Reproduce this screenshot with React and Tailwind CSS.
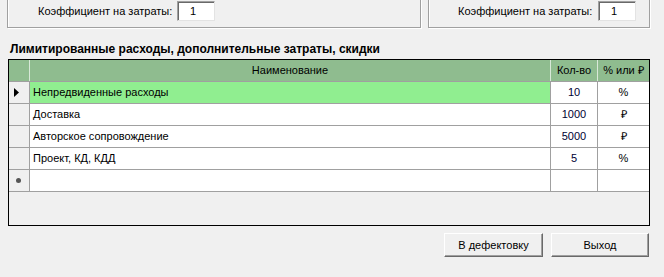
import React from 'react';

const rows = [
    { name: 'Непредвиденные расходы', qty: '10', unit: '%', selected: true },
    { name: 'Доставка', qty: '1000', unit: '₽' },
    { name: 'Авторское сопровождение', qty: '5000', unit: '₽' },
    { name: 'Проект, КД, КДД', qty: '5', unit: '%' },
];

const Field = ({ value }) => (
    <div className="w-[38px] h-[20px] bg-white border-t border-l border-[#a0a0a0] border-b border-r border-b-[#e3e3e3] border-r-[#e3e3e3] shadow-[inset_1px_1px_0_#696969] flex items-center pl-[12px]">
        {value}
    </div>
);

const Group = ({ className, labelClass }) => (
    <div className={`-mt-[10px] h-[38px] border border-[#a0a0a0] shadow-[1px_1px_0_#ffffff,inset_1px_1px_0_#ffffff] ${className}`}>
        <div className="flex items-center mt-[10px]">
            <span className={labelClass}>Коэффициент на затраты:</span>
            <Field value="1" />
        </div>
    </div>
);

const Button = ({ children, className }) => (
    <button className={`h-[24px] bg-[#f0f0f0] border border-t-white border-l-white border-b-[#696969] border-r-[#696969] shadow-[inset_-1px_-1px_0_#a0a0a0] ${className}`}>
        {children}
    </button>
);

const App = () => {
    return (
        <div className="w-[664px] h-[277px] overflow-hidden bg-[#f0f0f0] text-[11px] text-black font-['Liberation_Sans',Arial,sans-serif]">
            <div className="flex pl-[7px]">
                <Group className="w-[414px] pl-[30px]" labelClass="w-[139px]" />
                <Group className="w-[222px] ml-[7px] pl-[29px]" labelClass="w-[140px]" />
            </div>

            <div className="mt-[14px] pl-[10px] h-[15px] leading-[15px] text-[12px] font-bold">
                Лимитированные расходы, дополнительные затраты, скидки
            </div>

            <div className="ml-[8px] mt-[2px] w-[642px] h-[167px] border border-black bg-[#f0f0f0] flex flex-col">
                <div className="flex h-[22px] bg-[#8fbc8f] border-b border-[#a0a0a0]">
                    <div className="w-[21px] border-r border-[#d8e8d8]" />
                    <div className="w-[521px] border-r border-[#d8e8d8] flex items-center justify-center">Наименование</div>
                    <div className="w-[47px] border-r border-[#d8e8d8] flex items-center justify-center">Кол-во</div>
                    <div className="w-[51px] flex items-center justify-center">% или ₽</div>
                </div>
                {rows.map((r) => (
                    <div key={r.name} className="flex h-[22px] border-b border-[#a0a0a0]">
                        <div className="w-[21px] border-r border-[#a0a0a0] bg-[#f0f0f0] flex items-center pl-[5px]">
                            {r.selected && (
                                <svg width="5" height="9" viewBox="0 0 5 9">
                                    <path d="M0 0 L5 4.5 L0 9 Z" fill="#000" />
                                </svg>
                            )}
                        </div>
                        <div className={`w-[521px] border-r border-[#a0a0a0] flex items-center pl-[3px] ${r.selected ? 'bg-[#90ee90]' : 'bg-white'}`}>
                            {r.name}
                        </div>
                        <div className="w-[47px] border-r border-[#a0a0a0] bg-white flex items-center justify-center text-[#000033]">{r.qty}</div>
                        <div className="w-[51px] bg-white flex items-center justify-center">{r.unit}</div>
                    </div>
                ))}
                <div className="flex h-[22px] border-b border-[#a0a0a0]">
                    <div className="w-[21px] border-r border-[#a0a0a0] bg-[#f0f0f0] flex items-center pl-[7px]">
                        <span className="w-[5px] h-[5px] rounded-full bg-[#555555]" />
                    </div>
                    <div className="w-[521px] border-r border-[#a0a0a0] bg-white" />
                    <div className="w-[47px] border-r border-[#a0a0a0] bg-white" />
                    <div className="w-[51px] bg-white" />
                </div>
            </div>

            <div className="flex justify-end gap-[8px] pr-[15px] mt-[7px]">
                <Button className="w-[99px]">В дефектовку</Button>
                <Button className="w-[98px]">Выход</Button>
            </div>
        </div>
    );
};

export default App;
